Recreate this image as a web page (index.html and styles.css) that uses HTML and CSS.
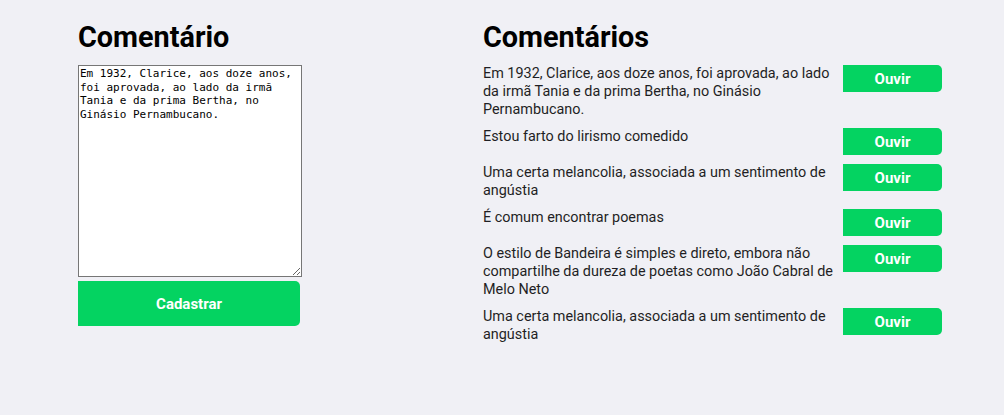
FILE: index.html
```html
<!DOCTYPE html>
<html lang="pt-BR">
<head>
<meta charset="utf-8">
<title>Comentários</title>
<link rel="stylesheet" href="styles.css">
</head>
<body>
<main class="page">
  <section class="form-col">
    <h1 class="title">Comentário</h1>
    <form class="form">
      <textarea class="input" spellcheck="false">Em 1932, Clarice, aos doze anos, foi aprovada, ao lado da irmã Tania e da prima Bertha, no Ginásio Pernambucano.</textarea>
      <button type="button" class="btn btn-submit">Cadastrar</button>
    </form>
  </section>
  <section class="list-col">
    <h1 class="title">Comentários</h1>
    <ul class="list">
      <li class="item"><p class="text">Em 1932, Clarice, aos doze anos, foi aprovada, ao lado da irmã Tania e da prima Bertha, no Ginásio Pernambucano.</p><button type="button" class="btn btn-play">Ouvir</button></li>
      <li class="item"><p class="text">Estou farto do lirismo comedido</p><button type="button" class="btn btn-play">Ouvir</button></li>
      <li class="item"><p class="text">Uma certa melancolia, associada a um sentimento de angústia</p><button type="button" class="btn btn-play">Ouvir</button></li>
      <li class="item"><p class="text">É comum encontrar poemas</p><button type="button" class="btn btn-play">Ouvir</button></li>
      <li class="item"><p class="text">O estilo de Bandeira é simples e direto, embora não compartilhe da dureza de poetas como João Cabral de Melo Neto</p><button type="button" class="btn btn-play">Ouvir</button></li>
      <li class="item"><p class="text">Uma certa melancolia, associada a um sentimento de angústia</p><button type="button" class="btn btn-play">Ouvir</button></li>
    </ul>
  </section>
</main>
</body>
</html>
```
FILE: styles.css
```css
* { box-sizing: border-box; }
html, body { margin: 0; padding: 0; }
body {
  background: #f0f0f5;
  font-family: Roboto, "Noto Sans", sans-serif;
  color: #1f1f24;
}
.page {
  display: grid;
  grid-template-columns: 224px 459px;
  column-gap: 181px;
  padding: 21px 0 0 78px;
  align-items: start;
}
.title {
  margin: 0 0 12px;
  font-size: 28.8px;
  line-height: 32px;
  font-weight: 700;
  color: #000;
}
.form {
  display: flex;
  flex-direction: column;
  gap: 4px;
}
.input {
  display: block;
  width: 224px;
  height: 212px;
  margin: 0;
  padding: 1px 1px;
  border: 1px solid #767676;
  background: #fff;
  font-family: "DejaVu Sans Mono", monospace;
  font-size: 11px;
  line-height: 13.5px;
  color: #000;
  resize: vertical;
}
.btn {
  border: 0;
  background: #04d361;
  color: #fff;
  font-family: Roboto, sans-serif;
  font-weight: 700;
  font-size: 15px;
  border-radius: 0 5px 5px 0;
  cursor: pointer;
}
.btn-submit {
  width: 222px;
  height: 45px;
}
.list {
  list-style: none;
  margin: 0;
  padding: 0;
  display: flex;
  flex-direction: column;
  gap: 9px;
}
.item {
  display: flex;
  align-items: flex-start;
  justify-content: space-between;
}
.text {
  margin: 0;
  width: 356px;
  font-size: 14.4px;
  line-height: 18px;
}
.btn-play {
  flex: none;
  width: 99px;
  height: 27px;
}
```
